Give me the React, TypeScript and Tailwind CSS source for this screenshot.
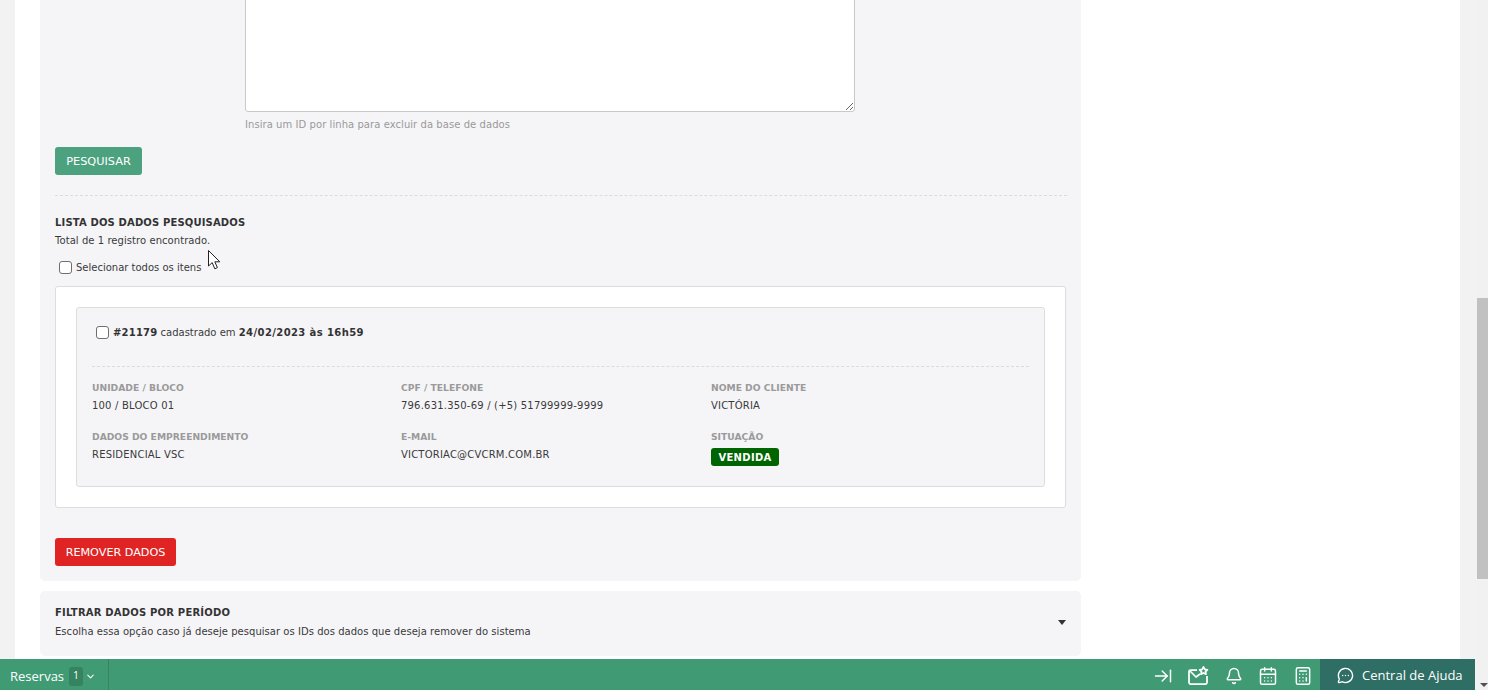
import React from "react";
import { ArrowRightToLine, Bell, CalendarDays, Calculator, MessageCircleMore, ChevronDown } from "lucide-react";

const font = { fontFamily: '"DejaVu Sans", Verdana, sans-serif' };

function Field({ label, value }: { label: string; value: React.ReactNode }) {
  return (
    <div className="h-[49px]">
      <div className="text-[9.2px] leading-[14px] font-bold text-[#9a9a9a]">{label}</div>
      <div className="mt-[4px] text-[10px] leading-[14px] tracking-[0.2px] text-[#3a3a3a]">{value}</div>
    </div>
  );
}

function Check() {
  return <span className="block w-[13px] h-[13px] rounded-[3px] border border-[#6f6f6f] bg-white shrink-0" />;
}

export default function App() {
  return (
    <div className="relative h-[690px] w-[1488px] overflow-hidden bg-white flex" style={font}>
      <div className="w-[15px] bg-[#f2f2f2] shrink-0" />
      <div className="w-[1445px] shrink-0 pl-[25px]">
        <div className="w-[1041px] -mt-[20px]">
          <div className="bg-[#f5f5f8] rounded-b-[5px] px-[15px] h-[601px]">
            <div className="pl-[190px]">
              <textarea className="block w-[610px] h-[132px] bg-white border border-[#c9c9c9] rounded-[3px] resize" readOnly />
              <div className="mt-[6px] text-[10px] leading-[14px] tracking-[0.06px] text-[#999999]">Insira um ID por linha para excluir da base de dados</div>
            </div>
            <button className="mt-[15px] block h-[28px] w-[87px] pt-[2px] rounded-[3px] bg-[#4ca17f] text-white text-[11.3px] text-center">PESQUISAR</button>
            <div className="mt-[20px] border-t border-dashed border-[#dcdcdc] w-[1012px]" />
            <div className="mt-[20px] text-[10px] leading-[14px] tracking-[0.15px] font-bold text-[#333333]">LISTA DOS DADOS PESQUISADOS</div>
            <div className="mt-[4px] text-[10px] leading-[14px] tracking-[0.06px] text-[#3a3a3a]">Total de 1 registro encontrado.</div>
            <div className="mt-[12px] ml-[4px] flex items-center gap-[4px] h-[14px] text-[10px] text-[#3a3a3a]">
              <Check />
              <span>Selecionar todos os itens</span>
            </div>
            <div className="mt-[12px] w-[1011px] h-[222px] bg-white border border-[#dddddd] rounded-[3px] p-[20px]">
              <div className="w-[969px] h-[180px] bg-[#f5f5f8] border border-[#dddddd] rounded-[3px] px-[15px]">
                <div className="h-[58px] pl-[4px] pt-[18px] flex items-start gap-[4px] text-[10px] leading-[14px] text-[#3a3a3a]">
                  <Check />
                  <span><b className="text-[#333333] tracking-[0.2px]">#21179</b> cadastrado em <b className="text-[#333333] tracking-[0.4px]">24/02/2023 às 16h59</b></span>
                </div>
                <div className="border-t border-dashed border-[#dcdcdc] w-[937px]" />
                <div className="mt-[14px] grid grid-cols-[309px_310px_1fr]">
                  <Field label="UNIDADE / BLOCO" value="100 / BLOCO 01" />
                  <Field label="CPF / TELEFONE" value="796.631.350-69 / (+5) 51799999-9999" />
                  <Field label="NOME DO CLIENTE" value="VICTÓRIA" />
                  <Field label="DADOS DO EMPREENDIMENTO" value="RESIDENCIAL VSC" />
                  <Field label="E-MAIL" value="VICTORIAC@CVCRM.COM.BR" />
                  <div>
                    <div className="text-[9.2px] leading-[14px] font-bold text-[#9a9a9a]">SITUAÇÃO</div>
                    <span className="mt-[4px] flex items-center justify-center w-[68px] h-[18px] rounded-[3px] bg-[#006400] text-white text-[10px] tracking-[0.3px] font-bold">VENDIDA</span>
                  </div>
                </div>
              </div>
            </div>
            <button className="mt-[30px] block h-[28px] w-[121px] pt-[2px] rounded-[3px] bg-[#e02424] text-white text-[11.2px] text-center">REMOVER DADOS</button>
          </div>
          <div className="mt-[10px] bg-[#f5f5f8] rounded-[5px] h-[65px] px-[15px] pt-[15px] flex items-start justify-between">
            <div>
              <div className="text-[10px] leading-[14px] tracking-[0.2px] font-bold text-[#333333]">FILTRAR DADOS POR PERÍODO</div>
              <div className="mt-[5px] text-[10px] leading-[14px] tracking-[0.035px] text-[#3a3a3a]">Escolha essa opção caso já deseje pesquisar os IDs dos dados que deseja remover do sistema</div>
            </div>
            <span className="mt-[14px] w-0 h-0 border-x-[4px] border-x-transparent border-t-[5px] border-t-[#333333]" />
          </div>
        </div>
      </div>
      <div className="w-[17px] bg-[#f2f2f2] shrink-0" />
      <div className="w-[11px] bg-[#f1f1f1] shrink-0 pt-[298px]">
        <div className="h-[281px] bg-[#c1c1c1]" />
      </div>

      <svg className="absolute left-[208px] top-[250px]" width="13" height="20" viewBox="0 0 13 20">
        <path d="M0.5 0.5V16L4.2 12.6L6.8 18.8L9.4 17.6L6.8 11.8H11.8Z" fill="#fff" stroke="#222" strokeWidth="1" />
      </svg>

      <div className="absolute left-0 bottom-0 w-[1475px] h-[31px] bg-[#409b75] flex text-white">
        <div className="w-[109px] border-r border-[#35835f] pl-[10px] flex items-center" style={{ fontFamily: '"Open Sans", sans-serif' }}>
          <span className="text-[13px] pt-[4px]">Reservas</span>
          <span className="ml-[5px] w-[14px] h-[19px] mt-[3px] rounded-[3px] bg-[#35835f] text-[10.5px] flex items-center justify-center">1</span>
          <ChevronDown className="ml-[2px] mt-[3px]" size={11} strokeWidth={2.25} />
        </div>
        <div className="flex-1 flex items-center justify-end gap-[15px] pr-[7px] pt-[2px]">
          <ArrowRightToLine size={20} strokeWidth={1.75} />
          <svg className="-ml-[1px] mr-[1px]" width="22" height="20" viewBox="0 0 22 20" fill="none" stroke="currentColor" strokeWidth="1.75" strokeLinejoin="round">
            <path d="M10 4H3.5Q2 4 2 5.5V16.5Q2 18 3.5 18H18.5Q20 18 20 16.5V10" />
            <path d="M3 5L9 11L13 8" />
            <path d="M16.5 1L17.8 3.4L20.4 3.8L18.5 5.6L19 8.2L16.5 7L14 8.2L14.5 5.6L12.6 3.8L15.2 3.4Z" />
          </svg>
          <Bell size={18} strokeWidth={2} />
          <CalendarDays size={20} strokeWidth={1.75} />
          <Calculator size={20} strokeWidth={1.75} />
        </div>
        <div className="w-[155px] bg-[#2e6e64] flex items-center pl-[17px] gap-[8px]" style={{ fontFamily: '"Open Sans", sans-serif' }}>
          <MessageCircleMore className="mt-[2px]" size={17} strokeWidth={2} />
          <span className="text-[13px] pt-[3px]">Central de Ajuda</span>
        </div>
      </div>
      <span className="absolute left-[1480px] top-[683px] w-0 h-0 border-x-[4px] border-x-transparent border-t-[4px] border-t-[#505050]" />
    </div>
  );
}
